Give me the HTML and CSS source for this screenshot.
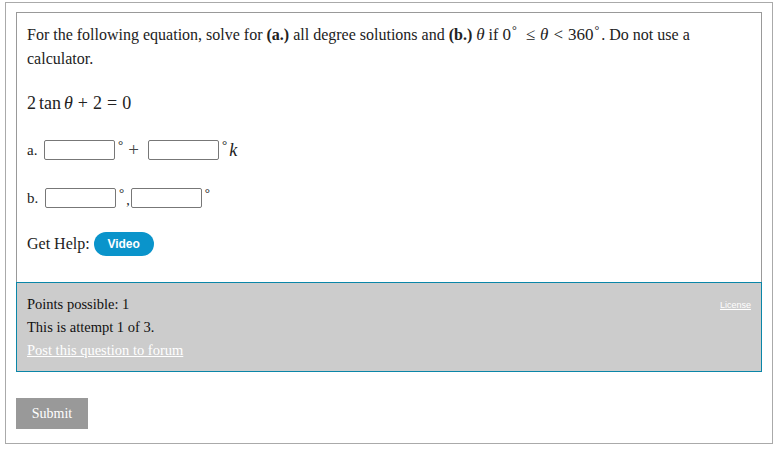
FILE: index.html
```html
<!DOCTYPE html>
<html>
<head>
<meta charset="utf-8">
<link rel="stylesheet" href="styles.css">
</head>
<body>
<div class="outer">
  <div class="question">
    <p class="prompt">For the following equation, solve for <b>(a.)</b> all degree solutions and <b>(b.)</b> <span class="m"><i>θ</i></span> if <span class="m">0<span class="dg">°</span><span class="rel rel-wide">≤</span><i>θ</i><span class="rel">&lt;</span>360<span class="dg">°</span></span>. Do not use a calculator.</p>
    <div class="eq m">2<span class="fn">tan</span><i>θ</i><span class="bin">+</span>2<span class="rel">=</span>0</div>
    <div class="row rowa">
      <span class="lbl">a.</span>
      <span class="inp"></span><span class="deg">°</span><span class="plus">+</span><span class="inp"></span><span class="deg">°</span><i class="k">k</i>
    </div>
    <div class="row rowb">
      <span class="lbl">b.</span>
      <span class="inp"></span><span class="deg">°</span><span class="comma">,</span><span class="inp"></span><span class="deg">°</span>
    </div>
    <div class="help">
      <span>Get Help:</span>
      <span class="video">Video</span>
    </div>
  </div>
  <div class="info">
    <a class="license">License</a>
    <div class="line">Points possible: 1</div>
    <div class="line">This is attempt 1 of 3.</div>
    <div class="line"><a class="forum">Post this question to forum</a></div>
  </div>
  <div class="submit">Submit</div>
</div>
</body>
</html>
```
FILE: styles.css
```css
html, body {
  margin: 0;
  padding: 0;
  background: #fff;
}
body {
  font-family: "Liberation Serif", "Times New Roman", serif;
  font-size: 16px;
  color: #222;
  padding: 2px 5px 0 5px;
}
.outer {
  width: 746px;
  border: 1px solid #aaa;
  padding: 9px 10px 14px 10px;
}
.question {
  border: 1px solid #999;
  border-bottom: none;
  padding: 10px 10px 26px 10px;
}
.prompt {
  margin: 0;
  line-height: 24px;
}
.m {
  font-family: "Liberation Serif", serif;
  font-size: 17px;
  line-height: 20px;
}
.dg {
  display: inline-block;
  font-size: 12px;
  vertical-align: top;
  line-height: 14px;
  margin-left: 1px;
  margin-right: 2px;
}
.rel {
  margin: 0 5px;
}
.rel-wide {
  margin-left: 7px;
}
.eq {
  margin-top: 20px;
  line-height: 24px;
  height: 24px;
  font-size: 18px;
}
.eq .fn {
  margin: 0 3px 0 3px;
}
.eq .bin {
  margin: 0 5px;
}
.eq .rel {
  margin: 0 5px;
}
.row {
  display: flex;
  align-items: center;
  height: 24px;
}
.rowa { margin-top: 23px; }
.rowb { margin-top: 24px; }
.lbl {
  width: 17px;
  font-size: 15px;
}
.inp {
  display: inline-block;
  width: 69px;
  height: 18px;
  border: 1px solid #777;
  border-radius: 2px;
  background: #fff;
}
.deg {
  font-size: 13px;
  align-self: flex-start;
  margin: 1px 3px 0 3px;
  line-height: 12px;
}
.plus {
  font-size: 19px;
  margin: 0 9px 0 2px;
  color: #444;
}
.k {
  font-size: 18px;
  margin-left: -1px;
}
.comma {
  font-size: 14px;
  margin: 6px 1px 0 -1px;
  align-self: center;
}
.rowb .lbl { width: 18px; }
.help {
  margin-top: 22px;
  display: flex;
  align-items: center;
  height: 24px;
  font-size: 16px;
}
.video {
  margin-left: 4px;
  width: 60px;
  height: 24px;
  border-radius: 12px;
  background: #0a94cb;
  color: #fff;
  font-family: "Liberation Sans", Arial, sans-serif;
  font-weight: bold;
  font-size: 12px;
  display: flex;
  align-items: center;
  justify-content: center;
}
.info {
  background: #ccc;
  border: 1px solid #0a86a8;
  padding: 10px 10px 9px 10px;
  font-size: 14.5px;
  color: #111;
}
.line {
  line-height: 23px;
  height: 23px;
}
.forum {
  color: #fff;
  text-decoration: underline;
}
.license {
  float: right;
  color: #fff;
  font-family: "Liberation Sans", Arial, sans-serif;
  font-size: 9px;
  text-decoration: underline;
  margin-top: 7px;
}
.submit {
  margin-top: 26px;
  width: 72px;
  height: 31px;
  background: #999;
  color: #fff;
  font-size: 14px;
  display: flex;
  align-items: center;
  justify-content: center;
}
```
